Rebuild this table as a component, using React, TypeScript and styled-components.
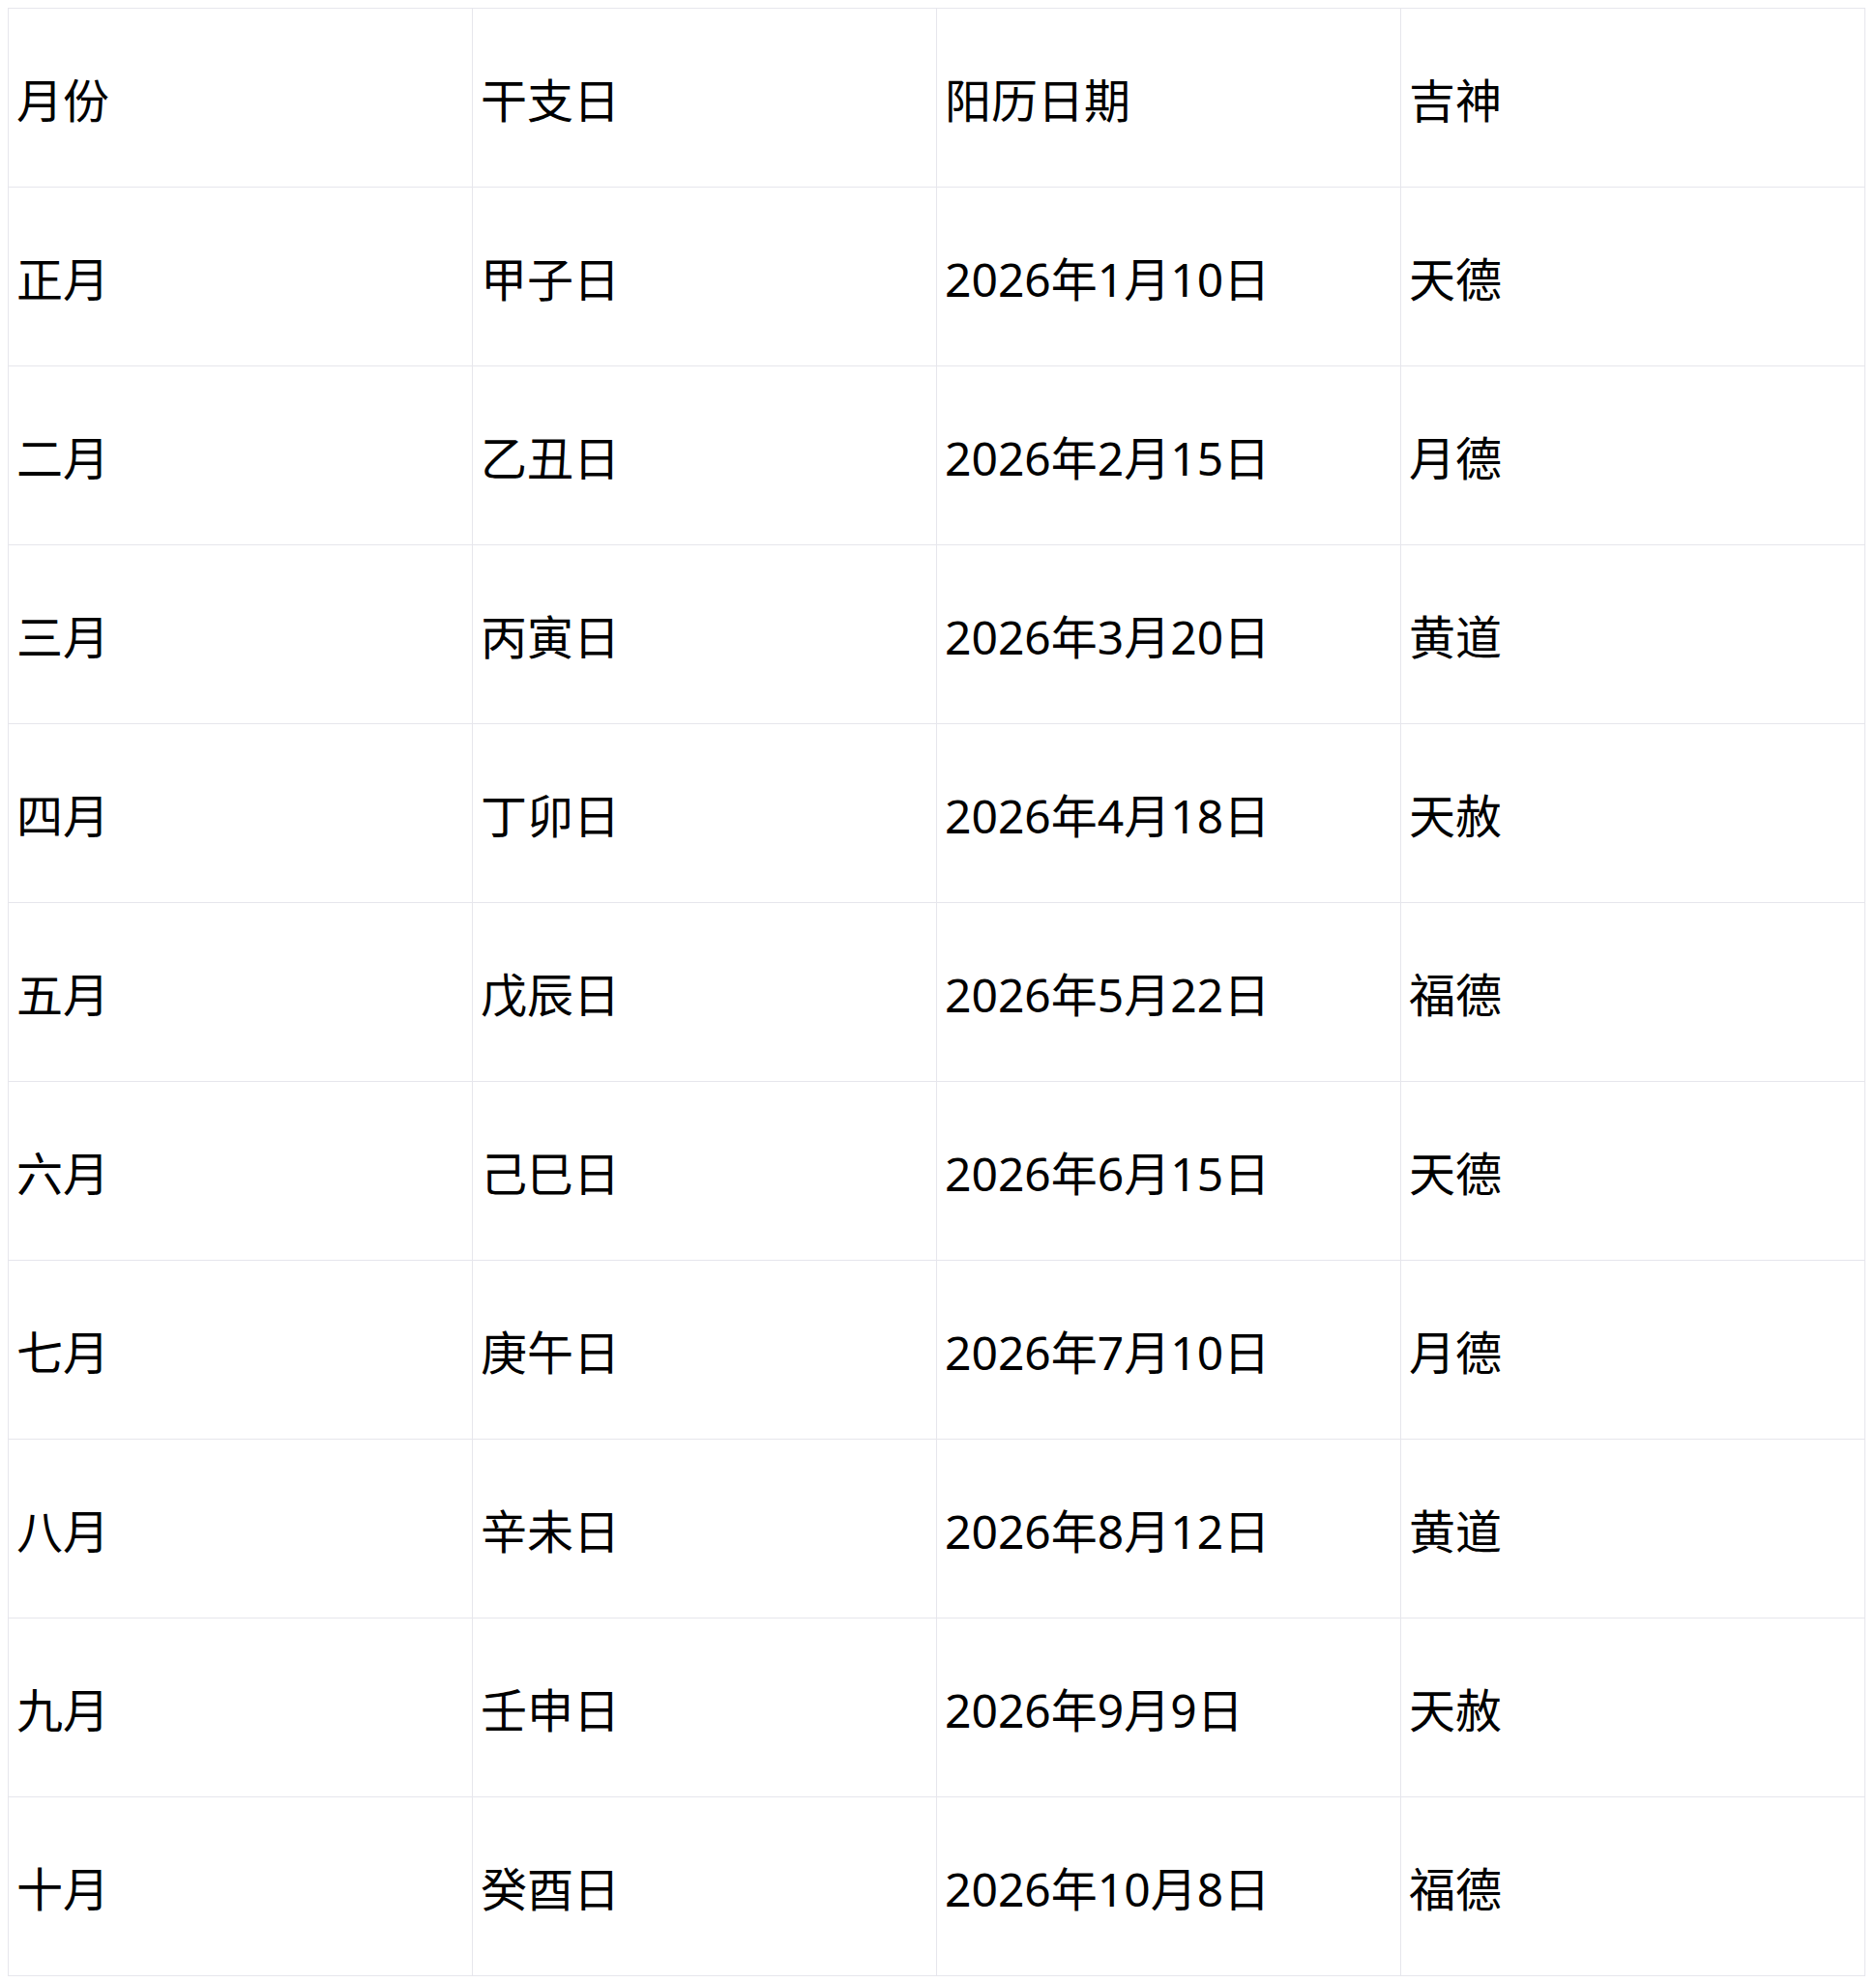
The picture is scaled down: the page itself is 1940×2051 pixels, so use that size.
import styled, { createGlobalStyle } from "styled-components";

const rows: [string, string, string, string][] = [
  ["正月", "甲子日", "2026年1月10日", "天德"],
  ["二月", "乙丑日", "2026年2月15日", "月德"],
  ["三月", "丙寅日", "2026年3月20日", "黄道"],
  ["四月", "丁卯日", "2026年4月18日", "天赦"],
  ["五月", "戊辰日", "2026年5月22日", "福德"],
  ["六月", "己巳日", "2026年6月15日", "天德"],
  ["七月", "庚午日", "2026年7月10日", "月德"],
  ["八月", "辛未日", "2026年8月12日", "黄道"],
  ["九月", "壬申日", "2026年9月9日", "天赦"],
  ["十月", "癸酉日", "2026年10月8日", "福德"],
];

const GlobalStyle = createGlobalStyle`
  body {
    margin: 8px;
    background: #fff;
    font-family: "Noto Sans", "Noto Sans CJK SC", sans-serif;
    color: #000;
  }
`;

export default function App() {
  return (
    <>
      <GlobalStyle />
      <Table>
        <thead>
          <tr>
            <Cell as="th">月份</Cell>
            <Cell as="th">干支日</Cell>
            <Cell as="th">阳历日期</Cell>
            <Cell as="th">吉神</Cell>
          </tr>
        </thead>
        <tbody>
          {rows.map((r) => (
            <tr key={r[0]}>
              {r.map((c, i) => (
                <Cell key={i}>{c}</Cell>
              ))}
            </tr>
          ))}
        </tbody>
      </Table>
    </>
  );
}

const Table = styled.table`
  border-collapse: collapse;
  width: 1921px;
  table-layout: fixed;
`;

const Cell = styled.td`
  border: 1px solid #e6e6ec;
  height: 185px;
  padding: 5px 8px 0;
  box-sizing: border-box;
  font-size: 48px;
  font-weight: 400;
  text-align: left;
  vertical-align: middle;
  line-height: 1.2;
  white-space: nowrap;
`;
